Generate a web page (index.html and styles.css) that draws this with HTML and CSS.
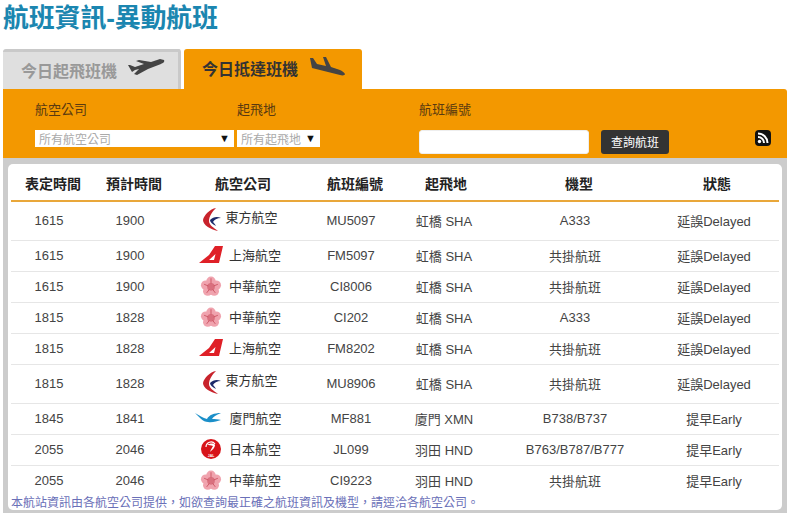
FILE: index.html
```html
<!DOCTYPE html>
<html lang="zh-Hant">
<head>
    <meta charset="UTF-8">
    <title>航班資訊-異動航班</title>
    <link rel="stylesheet" href="styles.css">
</head>
<body>
    <svg class="defs" width="0" height="0">
        <symbol id="ce" viewBox="0 0 18 24">
            <path d="M13 0C7 1 1 7 0 12c0 5 7 9 15 11-4-3-9-6-9-10 0-5 4-10 7-13z" fill="#c8232c"/>
            <path d="M7 12c3-3 7-4 11-2-4 0-7 2-8 4 1 1 2 2 3 4-4-2-6-4-6-6z" fill="#1c2a6b"/>
        </symbol>
        <symbol id="fm" viewBox="0 0 24 18">
            <path d="M0 17 10 9l6-9h8l-4 17zM10 14h5l1.500-6z" fill="#df2027" fill-rule="evenodd"/>
        </symbol>
        <symbol id="ci" viewBox="-2 -2 28 28">
            <g fill="#f0a3ae">
                <circle cx="12" cy="6.500" r="5.500"/>
                <circle cx="5.800" cy="11" r="5.500"/>
                <circle cx="8.200" cy="18" r="5.500"/>
                <circle cx="15.800" cy="18" r="5.500"/>
                <circle cx="18.200" cy="11" r="5.500"/>
            </g>
            <circle cx="12" cy="13" r="4.500" fill="#d9707e"/>
            <path d="M12 3v6M4 10l5 2M7 20l3-4M17 20l-3-4M20 10l-5 2" stroke="#c9505f" stroke-width="1"/>
        </symbol>
        <symbol id="mf" viewBox="0 0 28 12">
            <path d="M0 1c4 2 8 5 12 6 2-4 7-6 14-6-5 2-8 4-9 6 3 0 6 0 9 1-4 1-9 3-13 2C8 10 4 5 0 1z" fill="#1b8fc9"/>
        </symbol>
    </svg>

    <h1 class="title">航班資訊-異動航班</h1>

    <div class="tabs">
        <a class="tab tab-off" href="#">今日起飛班機
            <svg class="plane" width="38" height="18" viewBox="0 0 38 18"><path d="M37 2c1 2-1 3-3 4L21 11 10 17l-3-1 5-5-4 1-3 2-4-7h2l5 2 9-3-8-3 3-1 12 2 9-3z" fill="#444"/></svg>
        </a>
        <a class="tab tab-on" href="#">今日抵達班機
            <svg class="plane" width="37" height="20" viewBox="0 0 37 20"><path d="M1 2l2 10 28 7c3 1 5 0 5-1-1-2-3-3-5-4l-9-3-5-10h-3l3 9-9-2-4-6z" fill="#444"/></svg>
        </a>
    </div>

    <form class="search">
        <div class="field">
            <label class="field-label">航空公司</label>
            <div class="select-box select-wide">所有航空公司<span class="arrow">▼</span></div>
        </div>
        <div class="field">
            <label class="field-label">起飛地</label>
            <div class="select-box select-narrow">所有起飛地<span class="arrow">▼</span></div>
        </div>
        <div class="field">
            <label class="field-label">航班編號</label>
            <div class="flight-row">
                <input class="flight-input" type="text">
                <button class="btn" type="button">查詢航班</button>
            </div>
        </div>
        <svg class="rss" width="16" height="16" viewBox="0 0 16 16">
            <rect width="16" height="16" rx="4" fill="#111"/>
            <circle cx="4.500" cy="11.500" r="1.700" fill="#fff"/>
            <path d="M3 7a6 6 0 0 1 6 6M3 3.500A9.500 9.500 0 0 1 12.500 13" fill="none" stroke="#fff" stroke-width="2"/>
        </svg>
    </form>

    <div class="wrap">
        <div class="card">
            <table class="flights">
                <thead>
                    <tr>
                        <th class="c1">表定時間</th>
                        <th class="c2">預計時間</th>
                        <th class="c3">航空公司</th>
                        <th class="c4">航班編號</th>
                        <th class="c5">起飛地</th>
                        <th class="c6">機型</th>
                        <th class="c7">狀態</th>
                    </tr>
                </thead>
                <tbody>
                    <tr class="tall">
                        <td>1615</td><td>1900</td>
                        <td><span class="airline airline-ce"><svg class="logo logo-ce"><use href="#ce"/></svg><span>東方航空</span></span></td>
                        <td>MU5097</td><td>虹橋 SHA</td><td>A333</td><td class="c7">延誤Delayed</td>
                    </tr>
                    <tr>
                        <td>1615</td><td>1900</td>
                        <td><span class="airline"><svg class="logo"><use href="#fm"/></svg><span>上海航空</span></span></td>
                        <td>FM5097</td><td>虹橋 SHA</td><td>共掛航班</td><td class="c7">延誤Delayed</td>
                    </tr>
                    <tr>
                        <td>1615</td><td>1900</td>
                        <td><span class="airline"><svg class="logo"><use href="#ci"/></svg><span>中華航空</span></span></td>
                        <td>CI8006</td><td>虹橋 SHA</td><td>共掛航班</td><td class="c7">延誤Delayed</td>
                    </tr>
                    <tr>
                        <td>1815</td><td>1828</td>
                        <td><span class="airline"><svg class="logo"><use href="#ci"/></svg><span>中華航空</span></span></td>
                        <td>CI202</td><td>虹橋 SHA</td><td>A333</td><td class="c7">延誤Delayed</td>
                    </tr>
                    <tr>
                        <td>1815</td><td>1828</td>
                        <td><span class="airline"><svg class="logo"><use href="#fm"/></svg><span>上海航空</span></span></td>
                        <td>FM8202</td><td>虹橋 SHA</td><td>共掛航班</td><td class="c7">延誤Delayed</td>
                    </tr>
                    <tr class="tall">
                        <td>1815</td><td>1828</td>
                        <td><span class="airline airline-ce"><svg class="logo logo-ce"><use href="#ce"/></svg><span>東方航空</span></span></td>
                        <td>MU8906</td><td>虹橋 SHA</td><td>共掛航班</td><td class="c7">延誤Delayed</td>
                    </tr>
                    <tr>
                        <td>1845</td><td>1841</td>
                        <td><span class="airline"><svg class="logo logo-mf"><use href="#mf"/></svg><span>廈門航空</span></span></td>
                        <td>MF881</td><td>廈門 XMN</td><td>B738/B737</td><td class="c7">提早Early</td>
                    </tr>
                    <tr>
                        <td>2055</td><td>2046</td>
                        <td><span class="airline"><svg class="logo" viewBox="-2 -2 24 24">
                            <circle cx="10" cy="10" r="10" fill="#d7141a"/>
                            <path d="M5 8a5 5 0 0 1 9-3" fill="none" stroke="#fff" stroke-width="1.200"/>
                            <path d="M6 6c3-2 7-2 8 0 0 3-3 5-5 7 1-3 2-4 3-6-2-1-4-1-6-1z" fill="#fff"/>
                            <text x="10" y="18" text-anchor="middle" class="jal-text">JAL</text>
                        </svg><span>日本航空</span></span></td>
                        <td>JL099</td><td>羽田 HND</td><td>B763/B787/B777</td><td class="c7">提早Early</td>
                    </tr>
                    <tr class="last">
                        <td>2055</td><td>2046</td>
                        <td><span class="airline"><svg class="logo"><use href="#ci"/></svg><span>中華航空</span></span></td>
                        <td>CI9223</td><td>羽田 HND</td><td>共掛航班</td><td class="c7">提早Early</td>
                    </tr>
                </tbody>
            </table>
            <p class="note">本航站資訊由各航空公司提供，如欲查詢最正確之航班資訊及機型，請逕洽各航空公司。</p>
        </div>
    </div>
</body>
</html>
```

FILE: styles.css
```css
* {
    box-sizing: border-box;
}
body {
    margin: 0;
    padding: 0 2px 0 3px;
    font-family: "Liberation Sans", "Noto Sans CJK TC", sans-serif;
    background-color: #fff;
    color: #444;
    font-size: 13px;
}
.defs {
    position: absolute;
}
.title {
    margin: 0;
    height: 49px;
    padding-top: 2px;
    font-size: 26px;
    letter-spacing: -0.2px;
    line-height: 32px;
    color: #1b86b0;
    font-weight: bold;
}
.tabs {
    display: flex;
    gap: 3px;
    height: 40px;
}
.tab {
    width: 178px;
    display: flex;
    align-items: center;
    gap: 10px;
    padding: 0 0 2px 18px;
    font-size: 16px;
    font-weight: bold;
    text-decoration: none;
    border-radius: 3px 3px 0 0;
}
.tab-off {
    background-color: #dfdfdf;
    border-top: 3px solid #c9c9c9;
    border-right: 3px solid #c9c9c9;
    color: #999;
}
.tab-on {
    background-color: #f39800;
    color: #333;
}
.plane {
    flex: none;
    margin-top: -6px;
}
.tab-on .plane {
    margin-top: -4px;
    margin-left: 1px;
}
.search {
    position: relative;
    display: flex;
    height: 69px;
    padding: 12px 0 0 32px;
    background-color: #f39800;
    border-radius: 0 3px 0 0;
}
.field-label {
    display: block;
    height: 29px;
    line-height: 17px;
    font-size: 13px;
    color: #5a3a10;
}
.select-box {
    position: relative;
    height: 17px;
    padding-left: 4px;
    background-color: #fff;
    font-size: 12px;
    line-height: 21px;
    color: #aaa;
    overflow: hidden;
}
.arrow {
    position: absolute;
    right: 4px;
    top: 0;
    font-size: 11px;
    line-height: 16px;
    color: #111;
}
.select-wide {
    width: 199px;
    margin-right: 3px;
}
.select-narrow {
    width: 83px;
    margin-right: 99px;
}
.flight-row {
    display: flex;
    gap: 12px;
}
.flight-input {
    width: 170px;
    height: 24px;
    border: 1px solid #eee;
    border-radius: 3px;
    background-color: #fff;
}
.btn {
    width: 68px;
    height: 24px;
    padding: 0 0 2px;
    border: 0;
    border-radius: 3px;
    background-color: #333;
    color: #fff;
    font-family: inherit;
    font-size: 12px;
}
.rss {
    position: absolute;
    left: 752px;
    top: 41px;
}
.wrap {
    height: 355px;
    padding: 6px 5px 3px;
    background-color: #ccc;
}
.card {
    height: 346px;
    padding: 0 3px;
    background-color: #fff;
    border-radius: 5px;
}
.flights {
    width: 768px;
    border-collapse: collapse;
    table-layout: fixed;
}
.flights th {
    height: 37px;
    padding: 2px 0 0;
    font-size: 14px;
    color: #222;
    border-bottom: 2px solid #e9a73a;
}
.flights td {
    height: 31px;
    padding: 0;
    text-align: center;
    border-bottom: 1px solid #e6e6e6;
}
.flights .tall td {
    height: 39px;
}
.flights .last td {
    border-bottom: 0;
}
.c1 { width: 76px; }
.c2 { width: 86px; }
.c3 { width: 124px; }
.c4 { width: 108px; }
.c5 { width: 78px; }
.c6 { width: 184px; }
.flights .c7 {
    padding-right: 18px;
}
.flights th.c1,
.flights th.c2 {
    padding-left: 8px;
}
.flights th.c3 {
    padding-left: 16px;
}
.flights th.c4 {
    padding-left: 8px;
}
.flights th.c5 {
    padding-left: 4px;
}
.flights th.c6 {
    padding-left: 8px;
}
.flights th.c7 {
    padding-left: 6px;
}
.airline {
    display: inline-flex;
    align-items: center;
    gap: 6px;
    padding-left: 10px;
    color: #333;
}
.airline-ce {
    padding-left: 11px;
    gap: 4px;
}
.airline-ce span {
    margin-top: -6px;
}
.logo {
    width: 24px;
    height: 24px;
    flex: none;
    margin-top: 2px;
}
.logo-ce {
    width: 18px;
}
.logo-mf {
    width: 28px;
    margin-left: -3px;
}
.jal-text {
    font-size: 3.500px;
    font-weight: bold;
    fill: #fff;
}
.note {
    margin: 0;
    font-size: 12px;
    line-height: 14px;
    color: #6a70b8;
}
```
